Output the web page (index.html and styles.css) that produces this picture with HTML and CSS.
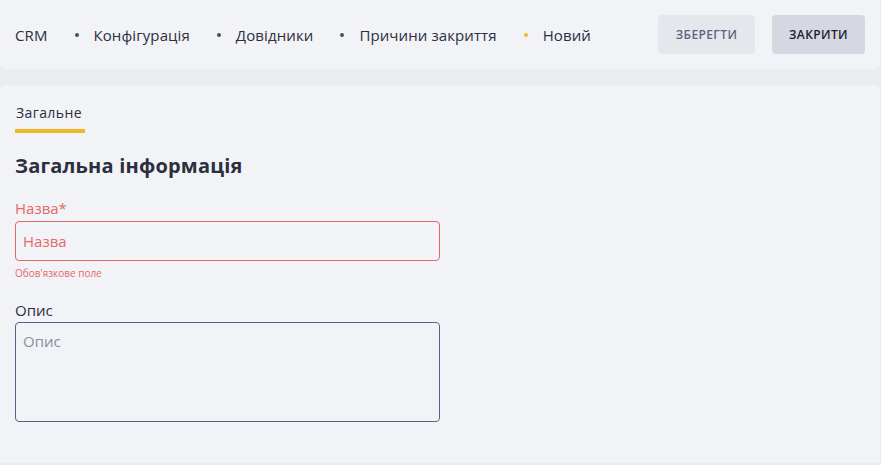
FILE: index.html
```html
<!DOCTYPE html>
<html lang="uk">
<head>
    <meta charset="UTF-8">
    <meta name="viewport" content="width=device-width, initial-scale=1.0">
    <title>Причини закриття - Новий</title>
    <link rel="stylesheet" href="styles.css">
</head>
<body>
    <div class="page">
        <header class="topbar">
            <nav class="breadcrumbs">
                <span class="crumb">CRM</span>
                <span class="dot"></span>
                <span class="crumb">Конфігурація</span>
                <span class="dot"></span>
                <span class="crumb">Довідники</span>
                <span class="dot"></span>
                <span class="crumb">Причини закриття</span>
                <span class="dot active"></span>
                <span class="crumb">Новий</span>
            </nav>
            <div class="actions">
                <button class="btn btn-save">ЗБЕРЕГТИ</button>
                <button class="btn btn-close">ЗАКРИТИ</button>
            </div>
        </header>

        <main class="card">
            <div class="tabs">
                <span class="tab active">Загальне</span>
            </div>

            <h2 class="section-title">Загальна інформація</h2>

            <div class="field has-error">
                <label class="field-label">Назва*</label>
                <input class="field-input" type="text" placeholder="Назва">
                <div class="field-error">Обов'язкове поле</div>
            </div>

            <div class="field">
                <label class="field-label">Опис</label>
                <textarea class="field-input field-textarea" placeholder="Опис"></textarea>
            </div>
        </main>
    </div>
</body>
</html>
```

FILE: styles.css
```css
* {
    box-sizing: border-box;
}

body {
    margin: 0;
    font-family: "Open Sans", "Noto Sans", sans-serif;
    background: #ebecf0;
    color: #2b2f3e;
}

.page {
    width: 880px;
    height: 465px;
    display: flex;
    flex-direction: column;
    gap: 16px;
}

/* Верхня панель */
.topbar {
    height: 69px;
    background: #f2f3f7;
    border-radius: 0 0 6px 6px;
    display: flex;
    align-items: center;
    justify-content: space-between;
    padding: 0 15px;
}

.breadcrumbs {
    display: flex;
    align-items: center;
    font-size: 15px;
    letter-spacing: 0.1px;
    color: #2b2f3e;
}

.dot {
    width: 4px;
    height: 4px;
    border-radius: 50%;
    background: #4a4f63;
    margin: 0 15px 0 27px;
}

.dot.active {
    background: #f2b824;
}

.actions {
    display: flex;
    gap: 17px;
}

.btn {
    border: none;
    border-radius: 4px;
    height: 39px;
    font-family: inherit;
    font-size: 12px;
    font-weight: 600;
    letter-spacing: 0.4px;
    cursor: pointer;
}

.btn-save {
    width: 97px;
    background: #e6e7ed;
    color: #5d6380;
}

.btn-close {
    width: 93px;
    background: #d5d8e1;
    color: #1d2130;
}

/* Основна картка */
.card {
    flex: 1;
    background: #f2f3f7;
    border-radius: 6px 6px 0 0;
    padding: 15px 15px 0;
    margin-bottom: 2px;
}

.tabs {
    display: flex;
}

.tab {
    font-size: 14px;
    letter-spacing: 0.4px;
    color: #2b2f3e;
    padding: 3px 1px 7px;
    width: 70px;
    border-bottom: 4px solid #f2b824;
}

.section-title {
    font-size: 20px;
    font-weight: 700;
    letter-spacing: 0.2px;
    margin: 19px 0 19px;
    color: #2b2f3e;
}

.field {
    width: 425px;
    margin-bottom: 20px;
}

.field-label {
    display: block;
    font-size: 15px;
    margin-bottom: 3px;
    color: #2b2f3e;
}

.field-input {
    display: block;
    width: 100%;
    height: 40px;
    padding: 0 7px;
    font-family: inherit;
    font-size: 15px;
    background: transparent;
    border: 1px solid #5c6080;
    border-radius: 4px;
    color: #2b2f3e;
    outline: none;
}

.field-input::placeholder {
    color: #8a8e9e;
}

.field-textarea {
    height: 100px;
    margin-top: -1px;
    padding: 8px 7px;
    resize: none;
}

.has-error .field-label {
    color: #e46868;
}

.has-error .field-input {
    border-color: #e46868;
}

.has-error .field-input::placeholder {
    color: #e46868;
}

.field-error {
    font-size: 10px;
    color: #e46868;
    margin-top: 5px;
}
```
